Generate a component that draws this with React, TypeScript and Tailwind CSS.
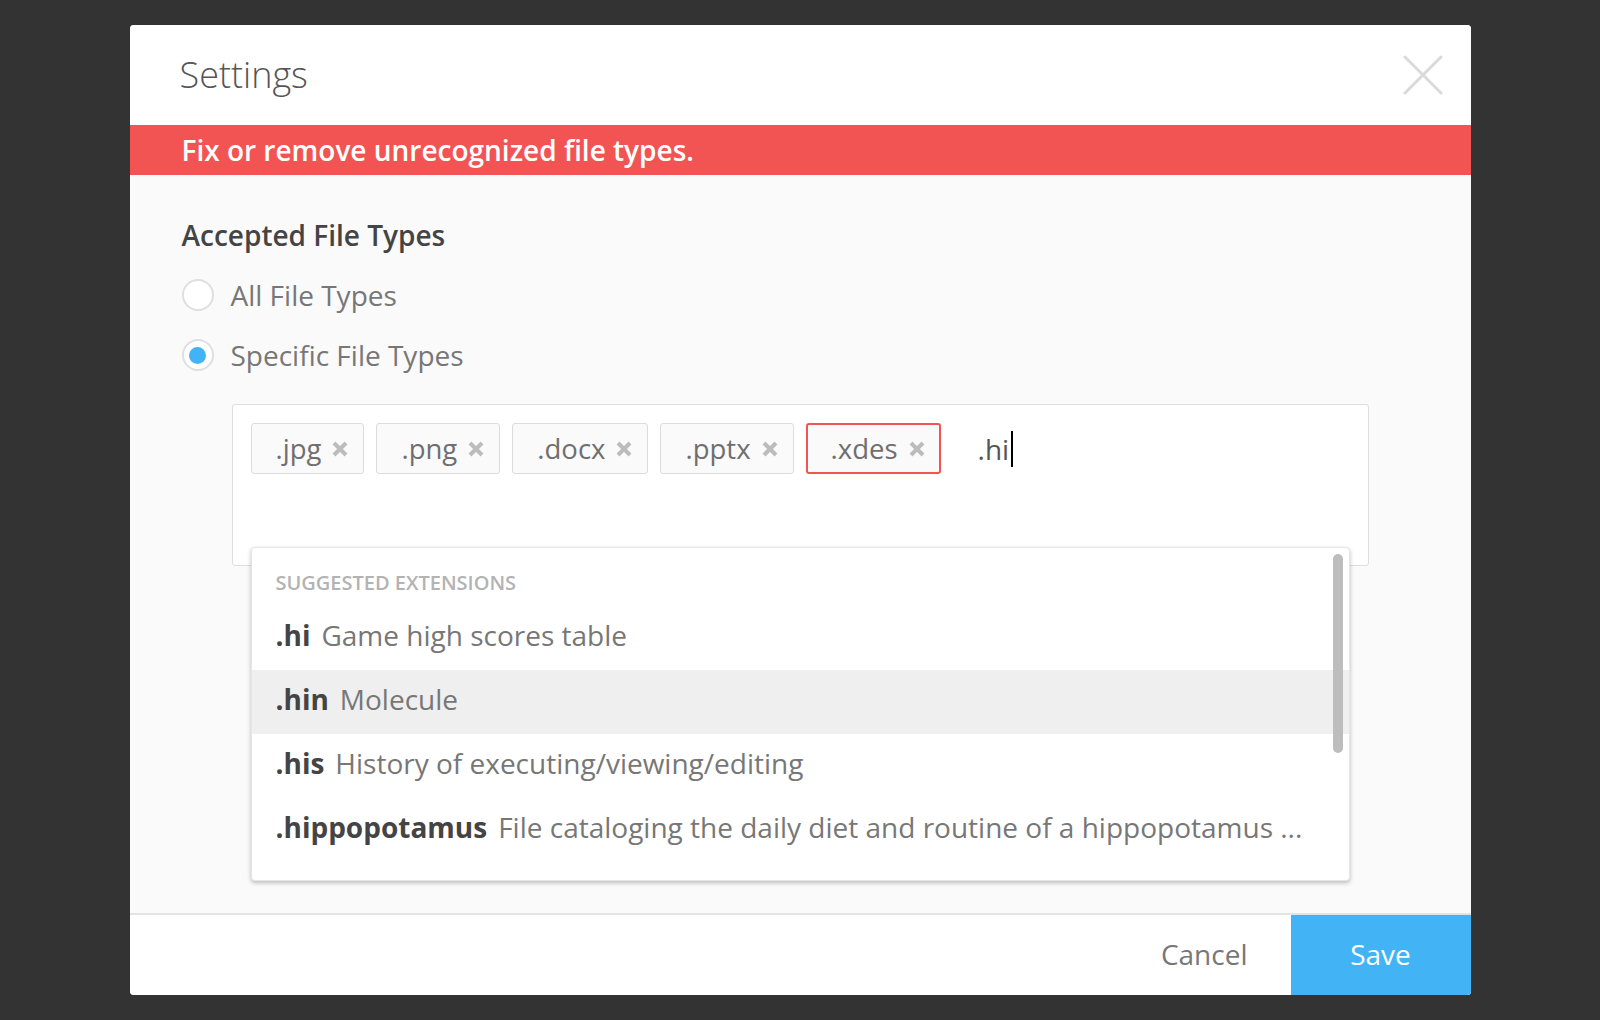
import React from "react";

type Tag = { ext: string; invalid?: boolean };

const tags: Tag[] = [
  { ext: ".jpg" },
  { ext: ".png" },
  { ext: ".docx" },
  { ext: ".pptx" },
  { ext: ".xdes", invalid: true },
];

const suggestions = [
  { ext: ".hi", desc: "Game high scores table" },
  { ext: ".hin", desc: "Molecule", active: true },
  { ext: ".his", desc: "History of executing/viewing/editing" },
  { ext: ".hippopotamus", desc: "File cataloging the daily diet and routine of a hippopotamus ..." },
];

const TagChip: React.FC<{ tag: Tag }> = ({ tag }) => (
  <div
    className={
      tag.invalid
        ? "h-[51px] flex items-center gap-[11px] pl-[23px] pr-[14px] bg-[#fafafa] border-2 border-[#f25454] rounded-[3px]"
        : "h-[51px] flex items-center gap-[11px] pl-[24px] pr-[15px] bg-[#fafafa] border border-[#dcdcdc] rounded-[3px]"
    }
  >
    <span className="text-[27.5px] leading-none text-[#6f6f6f]">{tag.ext}</span>
    <svg viewBox="0 0 16 16" className="w-[16px] h-[16px]">
      <path d="M2 2 L14 14 M14 2 L2 14" stroke="#bcbcbc" strokeWidth="4" />
    </svg>
  </div>
);

const Radio: React.FC<{ label: string; checked?: boolean }> = ({ label, checked }) => (
  <div className="h-[40px] flex items-center">
    <span className="w-[32px] h-[32px] rounded-full border-2 border-[#dfdfdf] bg-white flex items-center justify-center">
      {checked && <span className="w-[17px] h-[17px] rounded-full bg-[#42b4f6]" />}
    </span>
    <span className="ml-[17px] text-[28px] text-[#777]">{label}</span>
  </div>
);

export default function App() {
  return (
    <div className="w-full h-screen bg-[#333333] flex items-center justify-center font-['Open_Sans',sans-serif]">
      <div className="w-[1341px] h-[970px] bg-[#fafafa] rounded-[4px] overflow-hidden flex flex-col">
        {/* header */}
        <div className="h-[100px] bg-white flex items-center justify-between pl-[50px] pr-[28px]">
          <h1 className="text-[36px] font-light text-[#555]">Settings</h1>
          <button className="w-[40px] h-[40px]">
            <svg viewBox="0 0 40 40" className="w-[40px] h-[40px]">
              <path d="M2 2 L38 38 M38 2 L2 38" stroke="#dadada" strokeWidth="3" strokeLinecap="round" />
            </svg>
          </button>
        </div>

        {/* error banner */}
        <div className="h-[50px] bg-[#f25454] flex items-center pl-[52px]">
          <p className="text-[28px] font-semibold text-white">Fix or remove unrecognized file types.</p>
        </div>

        {/* body */}
        <div className="flex-1 pl-[52px] pr-[52px] pt-[42px]">
          <h2 className="h-[36px] flex items-center text-[28px] font-semibold text-[#444]">Accepted File Types</h2>
          <div className="mt-[22px]">
            <Radio label="All File Types" />
          </div>
          <div className="mt-[20px]">
            <Radio label="Specific File Types" checked />
          </div>

          <div className="relative ml-[50px] mr-[50px] mt-[29px] h-[162px] bg-white border border-[#dedede] rounded-[3px] p-[18px]">
            <div className="flex items-center gap-[12px]">
              {tags.map((t) => (
                <TagChip key={t.ext} tag={t} />
              ))}
              <div className="ml-[25px] flex items-center">
                <span className="text-[28px] text-[#555]">.hi</span>
                <span className="ml-[2px] w-[2px] h-[36px] bg-black" />
              </div>
            </div>

            {/* suggestions dropdown */}
            <div className="absolute left-[18px] right-[18px] top-[142px] h-[334px] bg-white border border-[#e6e6e6] rounded-[4px] shadow-[0_2px_4px_rgba(0,0,0,0.25)] overflow-hidden">
              <div className="h-[58px] pt-[23px] pl-[24px] text-[20px] leading-[24px] font-semibold text-[#b3b3b3]">
                SUGGESTED EXTENSIONS
              </div>
              {suggestions.map((s) => (
                <div
                  key={s.ext}
                  className={
                    s.active
                      ? "h-[64px] flex items-center pl-[24px] pb-[6px] bg-[#efefef]"
                      : "h-[64px] flex items-center pl-[24px] pb-[6px]"
                  }
                >
                  <span className="text-[28px] font-bold text-[#444]">{s.ext}</span>
                  <span className="ml-[11px] text-[28px] text-[#777]">{s.desc}</span>
                </div>
              ))}
              <div className="absolute right-[6px] top-[6px] w-[10px] h-[199px] rounded-full bg-[#bdbdbd]" />
            </div>
          </div>
        </div>

        {/* footer */}
        <div className="h-[82px] bg-white border-t-2 border-[#e3e3e3] flex justify-end">
          <button className="px-[43px] pb-[3px] text-[28px] text-[#777]">Cancel</button>
          <button className="w-[180px] pb-[3px] bg-[#42b4f6] text-[28px] text-white">Save</button>
        </div>
      </div>
    </div>
  );
}
